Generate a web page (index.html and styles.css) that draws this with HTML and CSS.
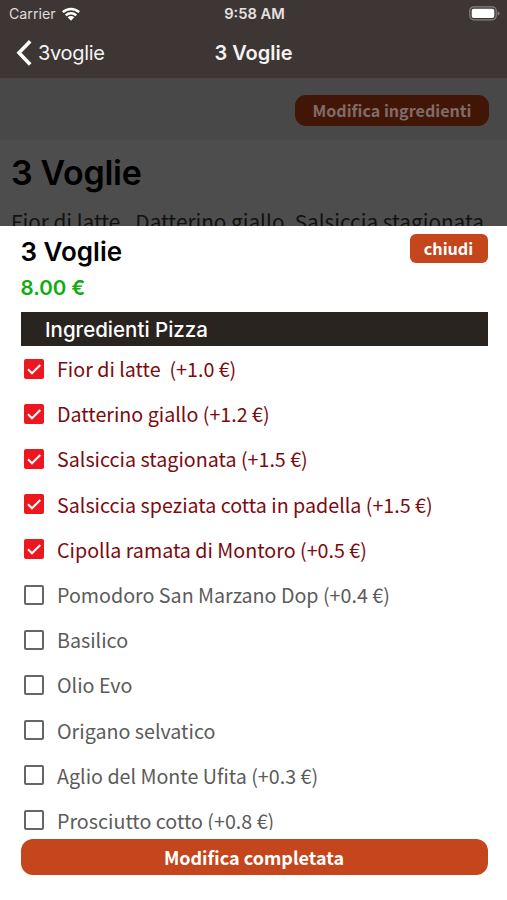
FILE: index.html
```html
<!DOCTYPE html>
<html lang="it">
<head>
<meta charset="utf-8">
<meta name="viewport" content="width=device-width, initial-scale=1">
<title>3 Voglie</title>
<link rel="stylesheet" href="styles.css">
</head>
<body>
<div class="phone">
  <div class="page">
    <header class="header">
      <div class="status">
        <div class="carrier"><span class="carrier-name">Carrier</span>
          <svg class="wifi" viewBox="0 0 18 14"><path d="M0 4.3a13 13 0 0 1 18 0l-1.7 1.8a10.5 10.5 0 0 0-14.6 0z"/><path d="M2.9 7.4a8.7 8.7 0 0 1 12.2 0l-1.7 1.8a6.3 6.3 0 0 0-8.8 0z"/><path d="M5.7 10.3a4.7 4.7 0 0 1 6.6 0L9 13.8z"/></svg>
        </div>
        <span class="time">9:58 AM</span>
        <svg class="battery" viewBox="0 0 31 15"><rect x=".8" y=".8" width="26.4" height="13" rx="4" fill="none" stroke="#88817f" stroke-width="1.2"/><rect x="2.7" y="2.7" width="22.6" height="9.2" rx="2" fill="#fff"/><path d="M28.6 5.2q2 .8 2 2.2t-2 2.2z" fill="#88817f"/></svg>
      </div>
      <nav class="nav">
        <div class="back"><svg class="chevron" viewBox="0 0 17 28"><path d="M14.2 2.2 3 13.8l11.2 11.6"/></svg><span class="back-label">3voglie</span></div>
        <span class="nav-title">3 Voglie</span>
        <span></span>
      </nav>
    </header>
    <div class="toolbar"><span class="edit">Modifica ingredienti</span></div>
    <main class="product">
      <h1 class="product-title">3 Voglie</h1>
      <p class="description">Fior di latte , Datterino giallo, Salsiccia stagionata,</p>
    </main>
  </div>
  <section class="sheet">
    <div class="sheet-head">
      <div><h2 class="sheet-title">3 Voglie</h2><p class="price">8.00 €</p></div>
      <button class="close">chiudi</button>
    </div>
    <h3 class="section"><span class="section-text">Ingredienti Pizza</span></h3>
    <ul class="list">
      <li class="row on"><svg class="box" viewBox="0 0 20 20"><rect width="20" height="20" rx="2"/><path d="m4 10.3 4 4L16.3 6"/></svg><span>Fior di latte&nbsp; (+1.0 €)</span></li>
      <li class="row on"><svg class="box" viewBox="0 0 20 20"><rect width="20" height="20" rx="2"/><path d="m4 10.3 4 4L16.3 6"/></svg><span>Datterino giallo (+1.2 €)</span></li>
      <li class="row on"><svg class="box" viewBox="0 0 20 20"><rect width="20" height="20" rx="2"/><path d="m4 10.3 4 4L16.3 6"/></svg><span>Salsiccia stagionata (+1.5 €)</span></li>
      <li class="row on"><svg class="box" viewBox="0 0 20 20"><rect width="20" height="20" rx="2"/><path d="m4 10.3 4 4L16.3 6"/></svg><span>Salsiccia speziata cotta in padella (+1.5 €)</span></li>
      <li class="row on"><svg class="box" viewBox="0 0 20 20"><rect width="20" height="20" rx="2"/><path d="m4 10.3 4 4L16.3 6"/></svg><span>Cipolla ramata di Montoro (+0.5 €)</span></li>
      <li class="row"><span class="box empty"></span><span>Pomodoro San Marzano Dop (+0.4 €)</span></li>
      <li class="row"><span class="box empty"></span><span>Basilico</span></li>
      <li class="row"><span class="box empty"></span><span>Olio Evo</span></li>
      <li class="row"><span class="box empty"></span><span>Origano selvatico</span></li>
      <li class="row"><span class="box empty"></span><span>Aglio del Monte Ufita (+0.3 €)</span></li>
      <li class="row"><span class="box empty"></span><span>Prosciutto cotto (+0.8 €)</span></li>
    </ul>
    <button class="done">Modifica completata</button>
  </section>
</div>
</body>
</html>
```

FILE: styles.css
```css
* { box-sizing: border-box; }
body, h1, h2, h3, p, ul { margin: 0; padding: 0; }
body { font-family: "Noto Sans CJK SC", "Noto Sans", sans-serif; background: #fff; }
button { border: 0; padding: 0; font-family: inherit; color: #fff; background: #c5461d; }

.phone { display: flex; flex-direction: column; height: 900px; overflow: hidden; }
.page { height: 226px; overflow: hidden; background: #4d4d4d; flex: none; }

.header { height: 79px; background: #3e3634; color: #f5f3f2; font-family: Inter, "Liberation Sans", sans-serif; border-bottom: 1px solid #494341; }
.status { display: grid; grid-template-columns: 1fr auto 1fr; align-items: center; height: 27px; padding: 0 7px 0 9px; }
.carrier { display: flex; align-items: center; gap: 6px; font-size: 14.2px; color: #dedbda; }
.wifi { width: 18px; height: 14px; fill: #fff; }
.time { font-size: 14.7px; font-weight: 600; color: #e6e3e2; }
.battery { width: 31px; height: 15px; justify-self: end; }
.nav { display: grid; grid-template-columns: 1fr auto 1fr; align-items: center; height: 51px; padding: 0 16px; }
.back { display: flex; align-items: center; gap: 5px; font-size: 20px; letter-spacing: -0.3px; }
.chevron { width: 17px; height: 28px; fill: none; stroke: #fff; stroke-width: 3.6; }
.nav-title { font-size: 20px; font-weight: 600; }

.toolbar { display: flex; justify-content: flex-end; align-items: center; height: 61px; padding: 1px 18px 0 0; background: #484848; }
.edit { display: flex; align-items: center; justify-content: center; width: 194px; height: 31px; border-radius: 11px; background: #421606; color: #806c66; font-size: 16.1px; font-weight: 700; }
.product { padding: 12px 11px 0; }
.product-title { font-family: Inter, sans-serif; font-size: 34px; line-height: 42px; font-weight: 600; letter-spacing: -0.3px; color: #000; }
.description { font-size: 20.75px; line-height: 30px; margin-top: 12px; white-space: nowrap; color: #111; }

.sheet { flex: 1; display: flex; flex-direction: column; min-height: 0; padding: 0 19.5px 25px 20.5px; background: #fff; }
.sheet-head { display: flex; justify-content: space-between; height: 86px; padding-top: 8px; }
.sheet-title { font-family: Inter, sans-serif; font-size: 26px; line-height: 36px; font-weight: 600; color: #000; }
.price { font-family: Inter, sans-serif; font-size: 20.5px; line-height: 35px; font-weight: 600; color: #0fac0f; }
.close { width: 78px; height: 29px; border-radius: 6px; font-size: 16.2px; font-weight: 700; margin-top: -0.5px; }
.section { height: 34px; flex: none; display: flex; align-items: center; padding: 1px 0 0 24.5px; background: #292420; color: #fff; font-family: Inter, sans-serif; font-size: 20.5px; font-weight: 500; }
.list { list-style: none; height: 484px; overflow: hidden; flex: none; }
.row { display: flex; align-items: center; height: 45.2px; padding-left: 3.5px; gap: 13px; font-size: 19.68px; color: #5b5b5b; white-space: nowrap; }
.on { color: #7c0a0e; }
.box { width: 20px; height: 20px; flex: none; }
.box rect { fill: #ed171f; }
.box path { fill: none; stroke: #fff; stroke-width: 2; }
.empty { border: 2px solid #666; border-radius: 2px; }
.done { height: 36px; margin-top: 9px; border-radius: 12px; font-size: 18px; font-weight: 700; flex: none; }
```
